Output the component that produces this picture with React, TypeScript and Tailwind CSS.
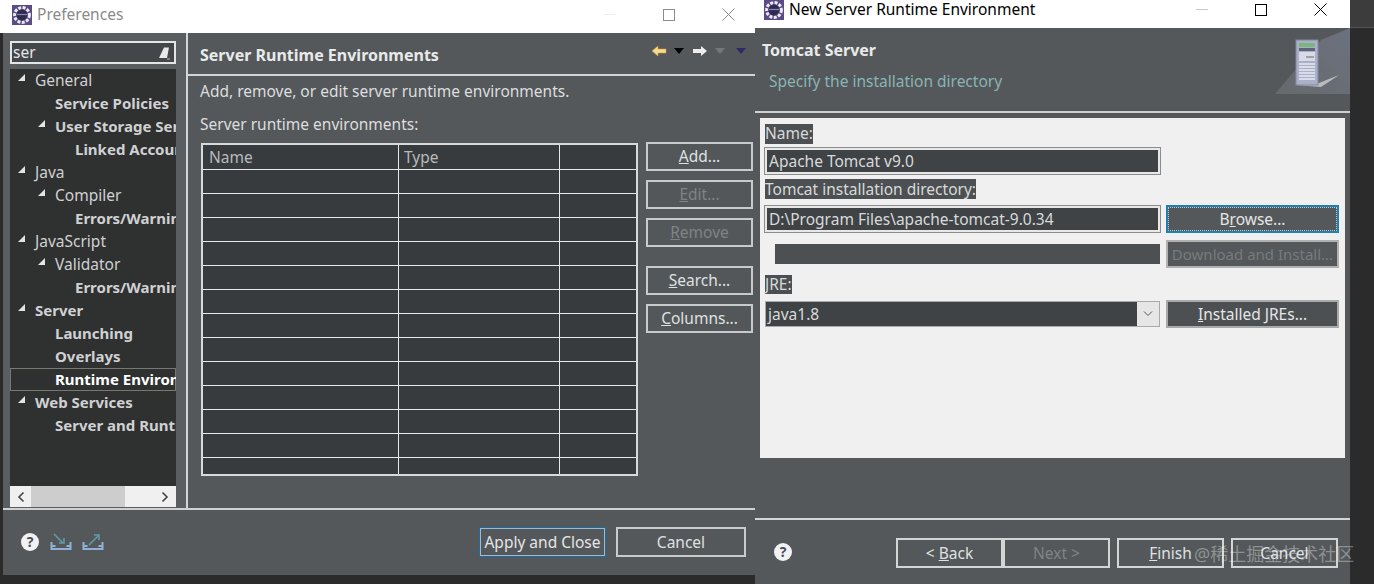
const FONT = { fontFamily: '"Noto Sans", "Noto Sans CJK SC", sans-serif' };

const treeIndent = ["pl-[7px]", "pl-[27px]", "pl-[47px]"];

const treeRows = [
  { label: "General", level: 0, arrow: true, bold: false },
  { label: "Service Policies", level: 1, arrow: false, bold: true },
  { label: "User Storage Service", level: 1, arrow: true, bold: true },
  { label: "Linked Accounts", level: 2, arrow: false, bold: true },
  { label: "Java", level: 0, arrow: true, bold: false },
  { label: "Compiler", level: 1, arrow: true, bold: false },
  { label: "Errors/Warnings", level: 2, arrow: false, bold: true },
  { label: "JavaScript", level: 0, arrow: true, bold: false },
  { label: "Validator", level: 1, arrow: true, bold: false },
  { label: "Errors/Warnings", level: 2, arrow: false, bold: true },
  { label: "Server", level: 0, arrow: true, bold: true },
  { label: "Launching", level: 1, arrow: false, bold: true },
  { label: "Overlays", level: 1, arrow: false, bold: true },
  { label: "Runtime Environments", level: 1, arrow: false, bold: true, selected: true },
  { label: "Web Services", level: 0, arrow: true, bold: true },
  { label: "Server and Runtime", level: 1, arrow: false, bold: true },
];

function EclipseIcon() {
  return (
    <svg width="20" height="20" viewBox="0 0 20 20" className="shrink-0">
      <rect width="20" height="20" fill="#5a4a86" />
      <circle cx="10" cy="10" r="7.4" fill="none" stroke="#ecebf0" strokeWidth="3" strokeDasharray="3 1.4" />
      <circle cx="10" cy="10" r="5.4" fill="#2f2b4e" />
      <path d="M5 9.5h10" stroke="#8d86b5" strokeWidth="1.2" />
    </svg>
  );
}

function WindowControls({ dark }: { dark: boolean }) {
  return (
    <div className="flex items-center">
      <div className={dark ? "h-px w-3 bg-[#c8c8c8]" : "h-px w-3 bg-[#eeeeee]"} />
      <div className={dark ? "ml-[47px] h-3 w-3 border border-black" : "ml-[47px] h-3 w-3 border border-[#8c8c8c]"} />
      <svg width="13" height="13" viewBox="0 0 13 13" className="ml-[47px]">
        <path d="M.5.5l12 12M12.5.5l-12 12" stroke={dark ? "#000" : "#8c8c8c"} strokeWidth="1" />
      </svg>
    </div>
  );
}

function HelpIcon() {
  return (
    <svg width="20" height="20" viewBox="0 0 20 20" className="shrink-0">
      <circle cx="10" cy="10" r="9" fill="#f2f2f4" />
      <text x="10" y="15" textAnchor="middle" fontSize="14" fontWeight="700" fill="#4a4d58" style={FONT}>?</text>
    </svg>
  );
}

function PrefIcon({ out }: { out: boolean }) {
  return (
    <svg width="22" height="20" viewBox="0 0 22 20" className="shrink-0">
      <path d="M1.5 10v7h19v-7M1.5 14h4M20.5 14h-4" fill="none" stroke="#8fb2d6" strokeWidth="2" />
      {out ? (
        <path d="M7 13l9-9M12 3h5v5" fill="none" stroke="#5e9aa8" strokeWidth="1.6" />
      ) : (
        <path d="M4 2l9 9M14 6v5h-5" fill="none" stroke="#5e9aa8" strokeWidth="1.6" />
      )}
    </svg>
  );
}

function Triangle() {
  return (
    <svg width="7" height="7" viewBox="0 0 7 7" className="mb-[6px]">
      <path d="M7 0v7H0z" fill="#e4e4e4" />
    </svg>
  );
}

function Sidebar() {
  return (
    <div className="flex w-[185px] shrink-0 flex-col border-r-2 border-[#d4d6d6] bg-[#5a5e60] pl-[7px] pr-[9px] pt-[8px]">
      <div className="flex h-[23px] w-[166px] items-center justify-between border-2 border-[#e4e6e6] bg-[#43474a] pl-[1px] pr-[3px]">
        <span className="text-[15.5px] text-[#e6e6e6]">ser</span>
        <svg width="14" height="14" viewBox="0 0 14 14">
          <path d="M2 12L7 1.5h5L10 12z" fill="#e8e8e8" />
          <path d="M10 13h3" stroke="#bbb" />
        </svg>
      </div>
      <div className="mt-[5px] h-[417px] w-[166px] overflow-hidden bg-[#2f3030]">
        {treeRows.map((row, i) => (
          <div
            key={i}
            className={`flex h-[23px] items-center whitespace-nowrap border ${treeIndent[row.level]} ${row.selected ? "border-[#77786f] text-white" : "border-transparent text-[#cfd1d3]"}`}
          >
            <span className="flex w-[17px] shrink-0 items-center">{row.arrow && <Triangle />}</span>
            <span className={row.bold ? "text-[15px] font-bold" : "text-[15.5px]"}>{row.label}</span>
          </div>
        ))}
      </div>
      <div className="flex h-[21px] w-[166px] items-center bg-[#f0f0f0]">
        <div className="flex w-[21px] justify-center">
          <svg width="8" height="12" viewBox="0 0 8 12"><path d="M6.5 1.5L2 6l4.5 4.5" fill="none" stroke="#444" strokeWidth="1.6" /></svg>
        </div>
        <div className="h-full w-[94px] bg-[#cdcdcd]" />
        <div className="flex flex-1 justify-end pr-[7px]">
          <svg width="8" height="12" viewBox="0 0 8 12"><path d="M1.5 1.5L6 6l-4.5 4.5" fill="none" stroke="#444" strokeWidth="1.6" /></svg>
        </div>
      </div>
    </div>
  );
}

function NavArrows() {
  return (
    <div className="mb-[6px] flex items-center">
      <svg width="16" height="12" viewBox="0 0 16 12"><path d="M1 6l6-5v3h8v4H7v3z" fill="#f6d98a" stroke="#d9a23c" strokeWidth=".5" /></svg>
      <svg width="10" height="6" viewBox="0 0 10 6" className="ml-[7px]"><path d="M0 0h10L5 6z" fill="#000" /></svg>
      <svg width="16" height="12" viewBox="0 0 16 12" className="ml-[8px]"><path d="M15 6L9 1v3H1v4h8v3z" fill="#eeeeee" /></svg>
      <svg width="10" height="6" viewBox="0 0 10 6" className="ml-[7px]"><path d="M0 0h10L5 6z" fill="#74787a" /></svg>
      <svg width="10" height="6" viewBox="0 0 10 6" className="ml-[11px]"><path d="M0 0h10L5 6z" fill="#2f2a66" /></svg>
    </div>
  );
}

function SideButton({ children, disabled, className }: { children: React.ReactNode; disabled?: boolean; className: string }) {
  return (
    <button className={`block h-[29px] w-[107px] border-2 border-[#c8cbcb] bg-[#53575a] pt-[1px] text-[15.5px] ${disabled ? "text-[#7f8385]" : "text-[#dfe1e1]"} ${className}`}>
      {children}
    </button>
  );
}

function RuntimeTable() {
  const rows = Array.from({ length: 13 });
  return (
    <div className="h-[333px] w-[437px] shrink-0 overflow-hidden border-2 border-[#d8dada] bg-[#383b3e] text-[15.5px] text-[#b8babc]">
      <div className="grid h-[25px] grid-cols-[196px_161px_1fr] border-b border-[#e8e8e8]">
        <div className="border-r border-[#e8e8e8] pl-[6px] leading-[24px]">Name</div>
        <div className="border-r border-[#e8e8e8] pl-[5px] leading-[24px]">Type</div>
        <div />
      </div>
      {rows.map((_, i) => (
        <div key={i} className="grid h-[24px] grid-cols-[196px_161px_1fr] border-b border-[#e8e8e8]">
          <div className="border-r border-[#e8e8e8]" />
          <div className="border-r border-[#e8e8e8]" />
          <div />
        </div>
      ))}
    </div>
  );
}

function PreferencesWindow() {
  return (
    <div className="flex h-[575px] w-[755px] shrink-0 flex-col">
      <div className="flex h-[33px] shrink-0 items-center justify-between bg-white pb-[4px] pl-[12px] pr-[20px]">
        <div className="flex items-center gap-[5px]">
          <EclipseIcon />
          <span className="text-[15.5px] text-[#8a8a8a]">Preferences</span>
        </div>
        <WindowControls dark={false} />
      </div>
      <div className="ml-[3px] flex flex-1 flex-col bg-[#54585a]">
        <div className="flex h-[477px] shrink-0 border-b-2 border-[#d0d2d2]">
          <Sidebar />
          <div className="flex flex-1 flex-col">
            <div className="flex h-[43px] shrink-0 items-center justify-between border-b-2 border-[#d4d6d6] pl-[12px] pr-[9px]">
              <span className="mt-[2px] text-[16px] font-bold text-[#e8eaea]">Server Runtime Environments</span>
              <NavArrows />
            </div>
            <div className="pl-[12px] pt-[3px] text-[15.5px] leading-[24px] text-[#dcdede]">
              Add, remove, or edit server runtime environments.
            </div>
            <div className="pl-[12px] pt-[9px] text-[15.5px] leading-[24px] text-[#dcdede]">Server runtime environments:</div>
            <div className="mt-[7px] flex items-start pl-[13px]">
              <RuntimeTable />
              <div className="ml-[8px] -mt-[1px]">
                <SideButton className=""><u>A</u>dd...</SideButton>
                <SideButton className="mt-[9px]" disabled><u>E</u>dit...</SideButton>
                <SideButton className="mt-[9px]" disabled><u>R</u>emove</SideButton>
                <SideButton className="mt-[19px]"><u>S</u>earch...</SideButton>
                <SideButton className="mt-[9px]"><u>C</u>olumns...</SideButton>
              </div>
            </div>
          </div>
        </div>
        <div className="flex flex-1 items-center justify-between pb-[1px] pl-[17px] pr-[9px]">
          <div className="flex items-center gap-[10px]">
            <HelpIcon />
            <PrefIcon out={false} />
            <PrefIcon out />
          </div>
          <div className="flex gap-[10px]">
            <button className="h-[30px] w-[127px] border-2 border-[#1f6a9e] pt-[1px] text-[15.5px] text-[#e4e6e6] outline outline-1 -outline-offset-2 outline-[#9bbcd0]">Apply and Close</button>
            <button className="h-[30px] w-[130px] border-2 border-[#c8cbcb] pt-[1px] text-[15.5px] text-[#dfe1e1]">Cancel</button>
          </div>
        </div>
      </div>
    </div>
  );
}

function ServerIcon() {
  return (
    <svg width="75" height="66" viewBox="0 0 75 66" className="shrink-0">
      <defs>
        <linearGradient id="glow" x1="0" y1="1" x2="1" y2="0">
          <stop offset="0" stopColor="#666a6b" />
          <stop offset="1" stopColor="#6c7180" />
        </linearGradient>
      </defs>
      <path d="M0 66L46 12 75 0v66z" fill="url(#glow)" />
      <path d="M20 57l24-2 20-8-18 12z" fill="#b9bcbc" />
      <rect x="21" y="12" width="22" height="45" fill="#aab0c8" stroke="#8488a2" />
      <rect x="24" y="15" width="16" height="4" fill="#7ab87a" />
      <rect x="24" y="20" width="16" height="3" fill="#5f6378" />
      <rect x="24" y="24" width="16" height="9" fill="#d8dbe6" />
      <path d="M31 29h8" stroke="#666" strokeWidth="1" />
      <path d="M24 36h16M24 39h16M24 42h16M24 45h16M24 48h16M24 51h16" stroke="#e8eaf2" strokeWidth="1.6" />
    </svg>
  );
}

function ServerWindow() {
  return (
    <div className="relative flex h-[584px] w-[595px] shrink-0 flex-col bg-[#54585a]">
      <div className="flex h-[28px] shrink-0 items-center justify-between bg-white pb-[9px] pl-[9px] pr-[23px]">
        <div className="flex items-center gap-[5px]">
          <EclipseIcon />
          <span className="text-[15.5px] text-black">New Server Runtime Environment</span>
        </div>
        <WindowControls dark />
      </div>
      <div className="flex h-[85px] shrink-0 justify-between border-b-2 border-[#cfd1d1]">
        <div className="pl-[7px] pt-[11px]">
          <div className="text-[16px] font-bold leading-[22px] text-[#e8eaea]">Tomcat Server</div>
          <div className="pl-[7px] pt-[9px] text-[15.5px] leading-[22px] text-[#89b4b4]">Specify the installation directory</div>
        </div>
        <ServerIcon />
      </div>
      <div className="mx-[5px] mt-[5px] h-[340px] shrink-0 bg-[#f0f0f0] pl-[5px] pt-[6px] text-[15.5px] text-[#d8dada]">
        <div className="h-[20px] w-fit bg-[#4c5052] leading-[19px]">Name:</div>
        <div className="mt-[4px] h-[26px] w-[395px] border-2 border-[#e8e8e8] bg-[#3f4346] pl-[2px] leading-[22px] outline outline-1 outline-[#8a8c8e]">Apache Tomcat v9.0</div>
        <div className="mt-[5px] h-[20px] w-fit bg-[#4c5052] leading-[20px]">Tomcat installation directory:</div>
        <div className="mt-[6px] flex h-[28px] items-center gap-[6px]">
          <div className="h-[26px] w-[395px] border-2 border-[#e8e8e8] bg-[#3f4346] pl-[2px] leading-[22px] outline outline-1 outline-[#8a8c8e]">D:\Program Files\apache-tomcat-9.0.34</div>
          <button className="h-[28px] w-[173px] border-2 border-[#1f7fb0] bg-[#54585a] pt-[1px] text-[15.5px] text-[#e4e6e6] outline outline-1 -outline-offset-3 outline-dotted outline-[#c8cbcb]">B<u>r</u>owse...</button>
        </div>
        <div className="mt-[7px] flex h-[28px] items-center gap-[6px]">
          <div className="ml-[10px] h-[20px] w-[385px] bg-[#4c5052]" />
          <button className="h-[28px] w-[173px] border-2 border-[#b0b2b2] bg-[#54585a] pt-[1px] text-[15px] text-[#777b7d]">Download and Install...</button>
        </div>
        <div className="mt-[7px] h-[19px] w-fit bg-[#4c5052] leading-[19px]">JRE:</div>
        <div className="mt-[6px] flex h-[28px] items-center gap-[6px]">
          <div className="flex h-[26px] w-[395px] border border-[#a8aaaa] bg-[#e6e6e6]">
            <div className="w-[371px] bg-[#3f4346] pl-[2px] leading-[24px]">java1.8</div>
            <div className="flex flex-1 items-center justify-center">
              <svg width="10" height="6" viewBox="0 0 10 6"><path d="M1 .5l4 4 4-4" fill="none" stroke="#555" strokeWidth="1" /></svg>
            </div>
          </div>
          <button className="h-[28px] w-[173px] border-2 border-[#a8aaaa] bg-[#4c5052] pt-[1px] text-[15.5px] text-[#e4e6e6]"><u>I</u>nstalled JREs...</button>
        </div>
      </div>
      <div className="mt-[60px] h-[2px] shrink-0 bg-[#d4d6d6]" />
      <div className="flex flex-1 items-start justify-between pl-[18px] pr-[12px] pt-[18px]">
        <div className="pt-[4px]"><HelpIcon /></div>
        <div className="flex">
          <button className="h-[30px] w-[107px] border-2 border-[#d4d6d6] pt-[1px] text-[15.5px] text-[#dfe1e1]">&lt; <u>B</u>ack</button>
          <button className="h-[30px] w-[107px] border-2 border-[#d4d6d6] pt-[1px] text-[15.5px] text-[#7f8385]">Next &gt;</button>
          <button className="ml-[7px] h-[30px] w-[107px] border-2 border-[#d4d6d6] pt-[1px] text-[15.5px] text-[#dfe1e1]"><u>F</u>inish</button>
          <button className="ml-[7px] h-[30px] w-[107px] border-2 border-[#d4d6d6] pt-[1px] text-[15.5px] text-[#dfe1e1]">Cancel</button>
        </div>
      </div>
      <span className="absolute left-[439px] top-[542px] whitespace-nowrap text-[18px] leading-[24px] text-white/35">@稀土掘金技术社区</span>
    </div>
  );
}

export default function App() {
  return (
    <div className="flex h-[584px] w-[1374px] overflow-hidden bg-[#2b2b2b]" style={FONT}>
      <PreferencesWindow />
      <ServerWindow />
      <div className="flex-1">
        <div className="h-[28px] border-b border-[#555] bg-[#3c3c3c]" />
      </div>
    </div>
  );
}
